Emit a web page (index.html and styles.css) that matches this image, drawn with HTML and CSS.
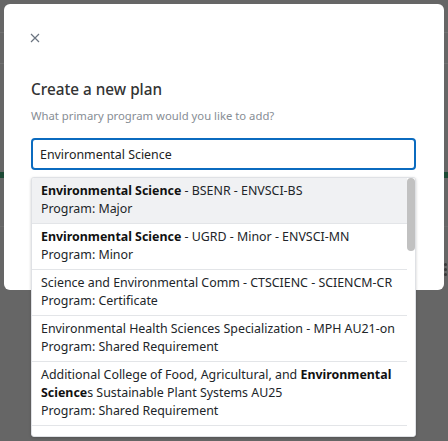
FILE: index.html
```html
<!DOCTYPE html>
<html>
<head>
<meta charset="utf-8">
<link rel="stylesheet" href="styles.css">
</head>
<body>
<div class="page">
  <div class="hdr-line l1"></div>
  <div class="hdr-line l2"></div>
  <div class="green"></div>
  <div class="sect-line"></div>
  <div class="kebab"><span></span><span></span><span></span></div>
</div>
<div class="modal">
  <button class="close" aria-label="Close">
    <svg width="10" height="10" viewBox="0 0 10 10"><path d="M1 1L9 9M9 1L1 9" stroke="#6b7480" stroke-width="1.2" fill="none"/></svg>
  </button>
  <h1 class="title">Create a new plan</h1>
  <p class="sub">What primary program would you like to add?</p>
  <div class="field">
    <input class="input" type="text" value="Environmental Science">
    <div class="menu">
      <div class="list">
        <div class="item active">
          <div class="l"><b>Environmental Science</b> - BSENR - ENVSCI-BS</div>
          <div class="l">Program: Major</div>
        </div>
        <div class="item">
          <div class="l"><b>Environmental Science</b> - UGRD - Minor - ENVSCI-MN</div>
          <div class="l">Program: Minor</div>
        </div>
        <div class="item">
          <div class="l">Science and Environmental Comm - CTSCIENC - SCIENCM-CR</div>
          <div class="l">Program: Certificate</div>
        </div>
        <div class="item">
          <div class="l">Environmental Health Sciences Specialization - MPH AU21-on</div>
          <div class="l">Program: Shared Requirement</div>
        </div>
        <div class="item">
          <div class="l">Additional College of Food, Agricultural, and <b>Environmental</b></div>
          <div class="l"><b>Science</b>s Sustainable Plant Systems AU25</div>
          <div class="l">Program: Shared Requirement</div>
        </div>
      </div>
      <div class="scroll"><div class="thumb"></div></div>
    </div>
  </div>
</div>
</body>
</html>
```
FILE: styles.css
```css
* { box-sizing: border-box; }
html, body { margin: 0; padding: 0; }
body {
  width: 448px;
  height: 441px;
  overflow: hidden;
  background: #5f5f5f;
  font-family: "Noto Sans", "Open Sans", sans-serif;
  position: relative;
}
.page {
  height: 441px;
  display: flex;
  flex-direction: column;
  background: #666666;
}
.hdr-line { height: 1px; background: #717171; }
.l1 { margin-top: 32px; }
.l2 { margin-top: 30px; }
.green { height: 6px; margin-top: 108px; background: #1e4a35; }
.sect-line { height: 1px; margin-top: 48px; background: #6d6d6d; }
.kebab {
  margin-top: 36px;
  align-self: flex-end;
  display: flex;
  flex-direction: column;
  gap: 2px;
  padding-right: 1px;
}
.kebab span { width: 3px; height: 3px; background: #3a3a3a; border-radius: 50%; }

.modal {
  position: absolute;
  left: 4px;
  top: 4px;
  width: 440px;
  height: 286px;
  background: #fff;
  border-radius: 6px;
  padding: 29px 27px 0 27px;
}
.close {
  display: block;
  border: 0;
  background: none;
  padding: 0;
  width: 10px;
  height: 10px;
  margin-left: -1px;
}
.close svg { display: block; }
.title {
  margin: 35px 0 0 0;
  font-size: 15.3px;
  font-weight: 500;
  color: #333;
  line-height: 22px;
}
.sub {
  margin: 8px 0 0 0;
  font-size: 11.3px;
  color: #878d94;
  line-height: 16px;
}
.field { position: relative; margin-top: 14px; }
.input {
  display: block;
  width: 385px;
  height: 32px;
  border: 2px solid #0b6bbf;
  border-radius: 4px;
  padding: 0 7px;
  font-family: inherit;
  font-size: 12.4px;
  color: #222;
  outline: none;
}
.menu {
  position: absolute;
  left: 0;
  top: 39px;
  width: 385px;
  height: 260px;
  background: #fff;
  border: 1px solid #dfe1e5;
  border-radius: 3px;
  box-shadow: 0 1px 3px rgba(0,0,0,0.2);
  display: flex;
  overflow: hidden;
}
.list { flex: 1; display: flex; flex-direction: column; }
.item {
  padding: 4px 9px 5px 9px;
  border-bottom: 1px solid #e3e5e8;
  font-size: 12.4px;
  color: #212529;
  line-height: 18px;
}
.item.active { background: #f0f1f3; }
.item b { color: #111; font-weight: 700; }
.scroll { width: 8px; background: #fff; position: relative; }
.thumb {
  position: absolute;
  top: 0;
  left: 0;
  width: 8px;
  height: 73px;
  background: #c1c1c1;
  border-radius: 4px;
}
```
